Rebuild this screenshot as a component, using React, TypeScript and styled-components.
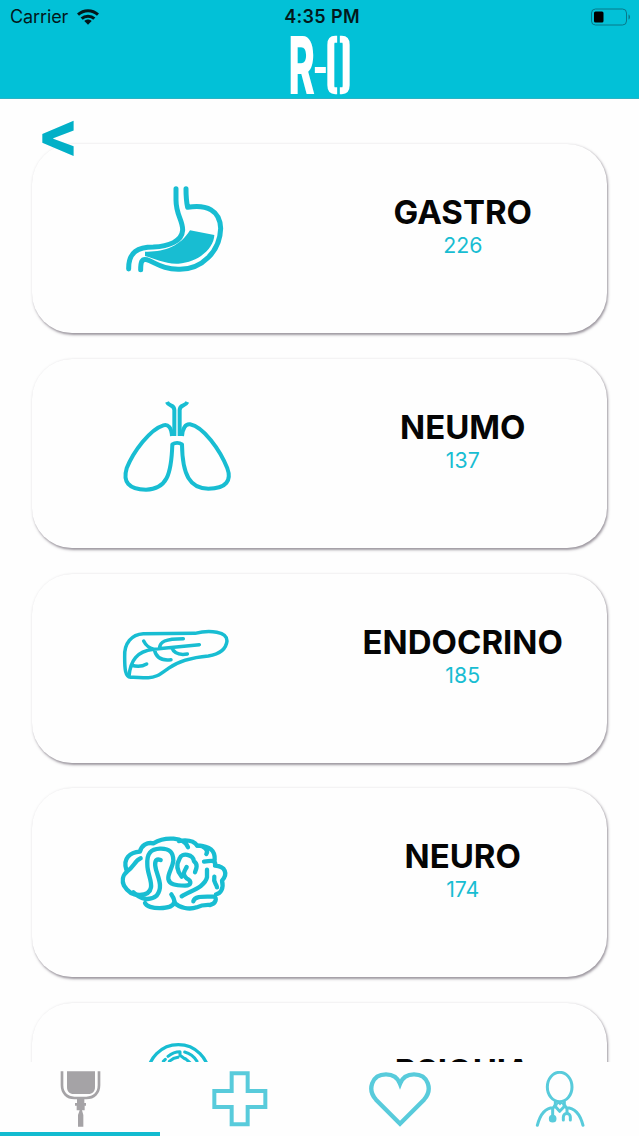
import React from 'react';
import styled, { createGlobalStyle } from 'styled-components';

const GlobalStyle = createGlobalStyle`
  * { box-sizing: border-box; }
  body { margin: 0; background: #fefefe; font-family: Inter, "Liberation Sans", sans-serif; }
`;

const Screen = styled.div`
  display: flex;
  flex-direction: column;
  height: 1136px;
  overflow: hidden;
  background: #fefefe;
`;

const Header = styled.header`
  flex: none;
  display: flex;
  flex-direction: column;
  align-items: center;
  height: 99px;
  background: #02c1d7;
  border-bottom: 1px solid #2bb3c4;
`;

const StatusBar = styled.div`
  display: grid;
  grid-template-columns: 1fr auto 1fr;
  align-items: center;
  width: 100%;
  height: 33px;
  padding: 0 8px 0 10px;
  font-size: 18px;
  color: #03181b;
  svg { display: block; }
`;

const Carrier = styled.div`
  display: flex;
  align-items: center;
  gap: 9px;
  letter-spacing: -0.1px;
`;

const Clock = styled.div`
  font-weight: 600;
  letter-spacing: 0.35px;
  margin-left: 3px;
`;

const BatterySlot = styled.div`
  display: flex;
  justify-content: flex-end;
`;

const Logo = styled.svg`
  display: block;
  width: 62px;
  height: 62px;
  margin-top: 2px;
  overflow: visible;
  font-family: Inter, sans-serif;
  font-weight: 800;
`;

const List = styled.main`
  flex: 1;
  min-height: 0;
  overflow: hidden;
  display: flex;
  flex-direction: column;
  padding: 0 32px;
`;

const Back = styled.button`
  flex: none;
  position: relative;
  z-index: 1;
  align-self: flex-start;
  width: 53px;
  height: 60px;
  margin: 5px 0 -20px;
  padding: 0;
  border: 0;
  background: none;
  color: #02b0c7;
  font: 800 61px/60px Inter, sans-serif;
`;

const Card = styled.section`
  flex: none;
  display: grid;
  grid-template-columns: 1fr 1fr;
  height: 189px;
  margin-bottom: 25.75px;
  border-radius: 40px;
  background: #fefefe;
  box-shadow: 1px 1.5px 2.5px rgba(60, 50, 65, 0.5);
`;

const IconSlot = styled.div<{ $top: number }>`
  display: flex;
  justify-content: center;
  align-items: flex-start;
  padding: ${(p) => p.$top}px 1px 0 0;
`;

const LineIcon = styled.svg<{ $weight: number }>`
  display: block;
  fill: none;
  stroke: #18bdd2;
  stroke-width: ${(p) => p.$weight};
  stroke-linecap: round;
  stroke-linejoin: round;
`;

const Label = styled.div`
  padding: 49px 1px 0 0;
  text-align: center;
`;

const Title = styled.h2`
  margin: 0;
  font-size: 33px;
  line-height: 39px;
  font-weight: 700;
  color: #050505;
`;

const Count = styled.div`
  font-size: 21.3px;
  line-height: 27px;
  color: #18bdd2;
`;

const TabBar = styled.nav`
  flex: none;
  display: grid;
  grid-template-columns: repeat(4, 160px);
  height: 74px;
  background: #fefefe;
`;

const Tab = styled.div<{ $active?: boolean }>`
  display: flex;
  justify-content: center;
  padding-top: 9px;
  border-bottom: 4px solid ${(p) => (p.$active ? '#12bbd0' : 'transparent')};
  color: ${(p) => (p.$active ? '#a5a3a6' : '#58cbdb')};
  svg { display: block; fill: none; stroke: currentColor; }
`;

const Stomach = () => (
  <LineIcon $weight={15} width="130" height="110" viewBox="0 0 390 330">
    <path d="M198 41V75C198 120 218 135 218 165C216 200 175 214 130 216C85 216 55 230 56 282" />
    <path d="M228 41C228 60 229 80 233 97C290 88 330 105 332 160C330 230 275 283 210 283C160 285 135 262 110 254C95 250 92 262 92 284" />
    <path d="M240 166L313 180C312 220 265 262 205 266C165 268 135 250 105 243V230C160 232 210 215 240 166Z" fill="#18bdd2" stroke="none" />
  </LineIcon>
);

const Lungs = () => (
  <LineIcon $weight={12} width="130" height="110" viewBox="0 0 390 330">
    <path strokeLinecap="butt" d="M171 36C176 50 193 42 193 60V138M232 36C226 50 209 42 209 60V138" />
    <path strokeLinecap="butt" d="M186 138C184 113 175 102 160 106C120 118 70 185 50 235C38 275 55 298 108 299C170 297 184 255 187 163C195 158 208 158 216 163C217 255 240 296 295 296C350 296 365 270 352 235C330 180 280 110 240 103C226 101 218 115 216 138" />
  </LineIcon>
);

const Pancreas = () => (
  <LineIcon $weight={10.5} width="130" height="80" viewBox="0 0 390 240">
    <path d="M62 187C45 185 44 160 44 125C42 85 65 58 100 56L255 55C300 44 352 50 351 78C348 105 325 118 295 123C250 127 210 135 175 160C150 178 135 190 110 188C90 188 75 186 62 187Z" />
    <path d="M57 183C62 135 80 110 130 103L268 89M101 78C108 92 115 98 133 103C138 128 155 138 183 134M148 100C150 80 165 71 220 71M185 98C192 115 208 121 232 117M64 150C80 156 98 154 110 147" />
  </LineIcon>
);

const Brain = () => (
  <LineIcon $weight={13} width="130" height="95" viewBox="0 0 390 285">
    <path d="M49 137C38 103 60 85 90 83C94 64 111 54 130 58C165 37 222 38 234 70M206 51C235 46 253 52 262 65C284 64 296 80 289 90" />
    <path d="M262 65C300 66 316 80 314 108M282 113C306 109 319 108 315 125C347 127 354 149 336 170C342 193 332 209 318 211" />
    <path d="M92 103C75 110 73 126 52 142C36 155 36 173 42 185C52 202 68 214 90 213C112 212 121 202 123 190C126 170 112 148 112 122C110 88 122 75 150 74C180 73 190 86 190 110C188 132 173 148 175 165C178 181 195 184 225 185C245 184 246 171 230 163C214 150 225 140 230 129" />
    <path d="M152 108C134 102 133 118 138 137C145 162 160 190 140 215C120 232 90 226 70 205M105 237C112 257 186 259 194 234C192 225 188 216 184 211" />
    <path d="M215 158C200 140 199 120 209 103C215 84 250 91 252 112C264 121 260 132 255 145M291 137V160C284 191 240 200 215 217M313 158C309 176 319 178 321 190" />
    <path d="M250 232C254 215 280 218 312 218C322 221 318 240 300 243C280 242 270 245 260 250C238 258 210 252 192 236" />
  </LineIcon>
);

const Mind = () => (
  <LineIcon $weight={9} width="70" height="70" viewBox="-10 3 210 210">
    <circle cx="105" cy="100" r="92" strokeWidth="10" />
    <path d="M60 58L66 52M74 43C86 33 97 29 110 29V40L124 50M124 30C140 34 152 43 161 58M78 58C86 51 94 47 104 46M126 50L140 62" />
  </LineIcon>
);

const specialties = [
  { name: 'GASTRO', count: 226, icon: <Stomach />, top: 31 },
  { name: 'NEUMO', count: 137, icon: <Lungs />, top: 31 },
  { name: 'ENDOCRINO', count: 185, icon: <Pancreas />, top: 41 },
  { name: 'NEURO', count: 174, icon: <Brain />, top: 36 },
  { name: 'PSIQUIA', icon: <Mind />, top: 40 },
];

export default function App() {
  return (
    <Screen>
      <GlobalStyle />
      <Header>
        <StatusBar>
          <Carrier>
            Carrier
            <svg width="22" height="16" viewBox="0 0 66 48" fill="none" stroke="#03181b" strokeWidth="9">
              <path d="M3 17C20 1 46 1 63 17M14 29C24 19 42 19 52 29" />
              <path d="M33 47L22 36C28 30 38 30 44 36Z" fill="#03181b" stroke="none" />
            </svg>
          </Carrier>
          <Clock>4:35 PM</Clock>
          <BatterySlot>
            <svg width="41" height="18" viewBox="0 0 41 18">
              <rect x="1.5" y="1" width="35" height="16" rx="4" fill="none" stroke="#08798a" />
              <rect x="4" y="3.5" width="9.5" height="11" rx="1.5" fill="#000" />
              <path d="M38.5 6.5C40.5 7 40.5 11 38.5 11.5Z" fill="#08798a" />
            </svg>
          </BatterySlot>
        </StatusBar>
        <Logo viewBox="55.5 105 186 186" fill="#fff">
          <text transform="translate(54 282) scale(0.5 1)" fontSize="239">R</text>
          <rect x="133" y="201" width="33" height="18" />
          <path d="M200 118H194Q181 118 181 134V256Q181 272 194 272H200M208 118H214Q227 118 227 134V256Q227 272 214 272H208" fill="none" stroke="#fff" strokeWidth="21" />
        </Logo>
      </Header>
      <List>
        <Back aria-label="Back">&lt;</Back>
        {specialties.map((s) => (
          <Card key={s.name}>
            <IconSlot $top={s.top}>{s.icon}</IconSlot>
            <Label>
              <Title>{s.name}</Title>
              {s.count && <Count>{s.count}</Count>}
            </Label>
          </Card>
        ))}
      </List>
      <TabBar>
        <Tab $active>
          <svg width="41" height="56" viewBox="179 242 123 168">
            <path d="M185 243V285C185 308 200 323 222 323H258C281 323 296 308 296 285V243" strokeWidth="8" />
            <path d="M200 243H284V290C284 304 276 311 264 311H220C208 311 200 304 200 290ZM230 326H252V338H257V346H253V360H245L249 374V409H233V374L238 360H229V346H224V338H230Z" fill="currentColor" stroke="none" />
          </svg>
        </Tab>
        <Tab>
          <svg width="56" height="56" viewBox="638 242 168 168">
            <path d="M697 249H745V302H798V350H745V402H697V350H645V302H697Z" strokeWidth="12" />
          </svg>
        </Tab>
        <Tab>
          <svg width="62" height="56" viewBox="146 242 186 168">
            <path d="M239 400L167 328C140 298 154 252 197 252C216 252 232 262 239 280C246 262 262 252 281 252C324 252 338 298 311 328Z" strokeWidth="13" />
          </svg>
        </Tab>
        <Tab>
          <svg width="50" height="56" viewBox="644 242 150 168" strokeWidth="9" strokeLinecap="round" strokeLinejoin="round">
            <ellipse cx="718" cy="290" rx="37" ry="44" />
            <path d="M651 405C660 370 676 352 699 352L705 346V334M788 405C779 370 763 352 738 352L732 346V334M703 346L718 363L734 346M697 353V380M740 353V369M729 389V380C729 366 750 366 750 380V389" />
            <path d="M709 344C712 336 718 338 719 342C720 338 727 336 729 344" strokeWidth="5" />
            <circle cx="697" cy="385" r="7" fill="currentColor" />
          </svg>
        </Tab>
      </TabBar>
    </Screen>
  );
}
